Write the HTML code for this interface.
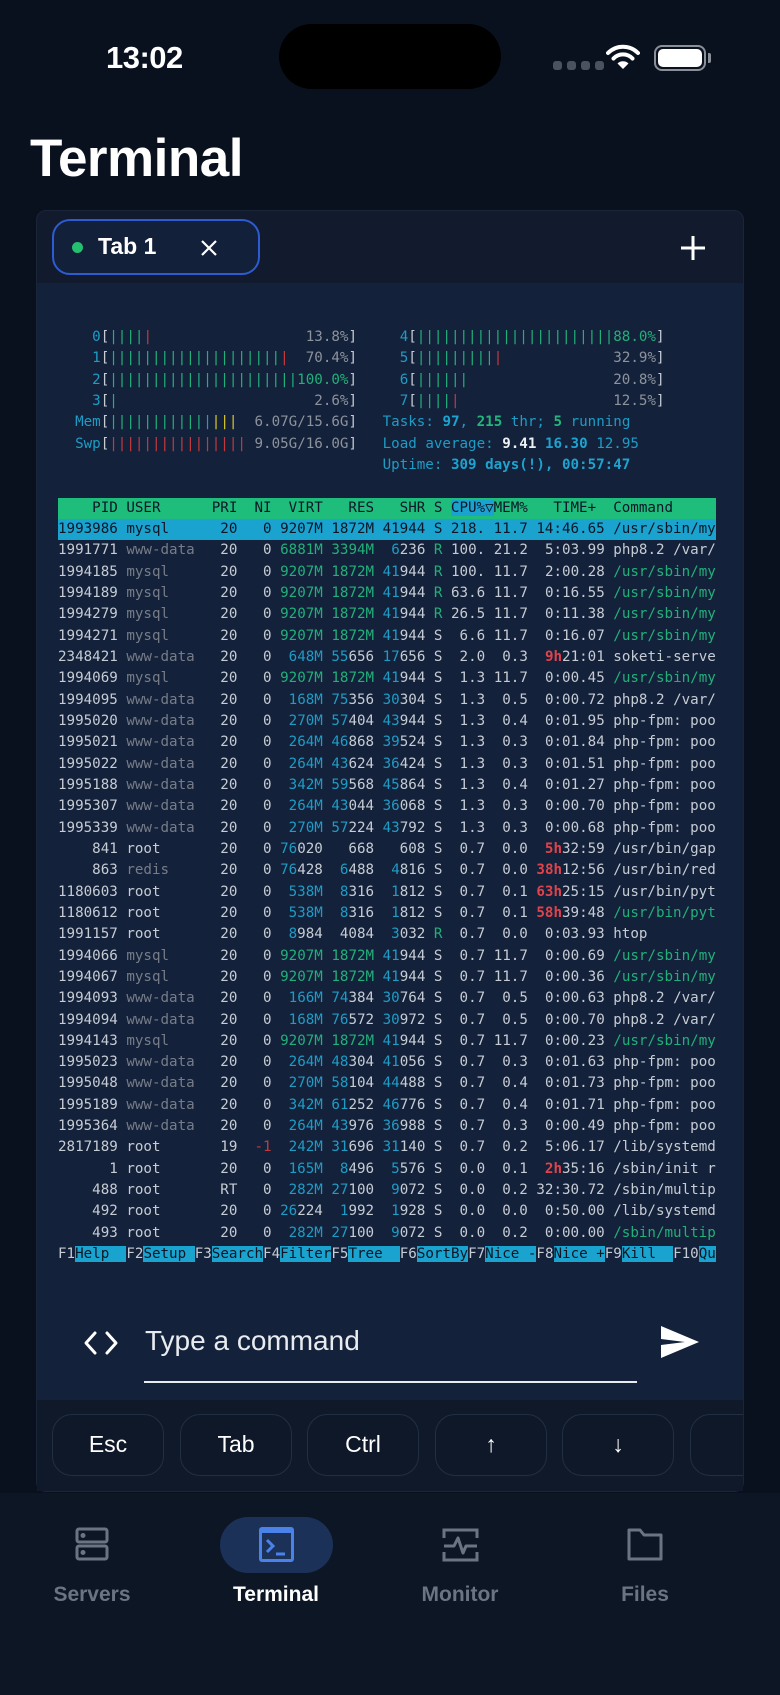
<!DOCTYPE html>
<html><head><meta charset="utf-8"><style>
*{margin:0;padding:0;box-sizing:border-box}
body{width:780px;height:1695px;background:#0a111e;position:relative;overflow:hidden;font-family:"Liberation Sans",sans-serif;color:#fff}
.abs{position:absolute}
.term{position:absolute;left:58px;top:327px;font-family:"DejaVu Sans Mono",monospace;font-size:14.2px;line-height:21.33px;color:#c6ccd4}
.term div{height:21.33px;white-space:pre}
g{color:#22b07a}v{color:#1e9cc6}d{color:#767d88}r{color:#e0434b;font-weight:bold}x{color:#c33a3e}y{color:#d8c72c}o{color:#8c939d}
w{color:#eef1f4;font-weight:bold}bv{color:#1ea3d0;font-weight:bold}bg{color:#22b67c;font-weight:bold}
.hd{background:#1fbd7b;color:#0c1626;width:658px}
.hs{background:#1aa3cf}
.sel{background:#1aa3cf;color:#0c1626;width:658px}
k{background:#1aa3cf;color:#0c1626}
.key{position:absolute;top:1414px;width:112px;height:62px;border:1.5px solid #222f43;border-radius:20px;background:#0e1828;color:#fff;font-size:23px;text-align:center;line-height:59px}
.nl{position:absolute;top:1583px;width:160px;text-align:center;font-size:21px;color:#6b7482;font-weight:bold}
</style></head><body>
<div class="abs" style="left:106px;top:40px;font-size:31px;font-weight:bold;letter-spacing:-0.5px">13:02</div>
<div class="abs" style="left:279px;top:24px;width:222px;height:65px;background:#000;border-radius:33px"></div>
<div class="abs" style="left:553px;top:61px;width:9px;height:9px;border-radius:3px;background:#4a5260"></div>
<div class="abs" style="left:567px;top:61px;width:9px;height:9px;border-radius:3px;background:#4a5260"></div>
<div class="abs" style="left:581px;top:61px;width:9px;height:9px;border-radius:3px;background:#4a5260"></div>
<div class="abs" style="left:595px;top:61px;width:9px;height:9px;border-radius:3px;background:#4a5260"></div>
<svg class="abs" style="left:606px;top:44px" width="34" height="26" viewBox="0 0 34 26"><path d="M2 9 A21 21 0 0 1 32 9" stroke="#fff" stroke-width="4" fill="none" stroke-linecap="round"/><path d="M7.5 14.5 A13 13 0 0 1 26.5 14.5" stroke="#fff" stroke-width="4" fill="none" stroke-linecap="round"/><path d="M17 25 L11.5 19.5 A8 8 0 0 1 22.5 19.5 Z" fill="#fff"/></svg>
<div class="abs" style="left:654px;top:45px;width:52px;height:26px;border:2.5px solid #8a8f98;border-radius:8px"></div>
<div class="abs" style="left:658px;top:49px;width:44px;height:18px;background:#fff;border-radius:5px"></div>
<div class="abs" style="left:708px;top:53px;width:3px;height:10px;background:#8a8f98;border-radius:0 2px 2px 0"></div>
<div class="abs" style="left:30px;top:128px;font-size:53px;font-weight:bold;letter-spacing:-0.5px">Terminal</div>
<div class="abs" style="left:36px;top:210px;width:708px;height:1282px;background:#111b2d;border:1px solid #1a2538;border-radius:10px"></div>
<div class="abs" style="left:37px;top:283px;width:706px;height:1117px;background:#14213a"></div>
<div class="abs" style="left:37px;top:1400px;width:706px;height:91px;background:#0f1929"></div>
<div class="abs" style="left:52px;top:219px;width:208px;height:56px;border:2px solid #2d5bd1;border-radius:18px;background:#132039"></div>
<div class="abs" style="left:72px;top:242px;width:11px;height:11px;border-radius:50%;background:#22c06f"></div>
<div class="abs" style="left:98px;top:233px;font-size:23px;font-weight:bold">Tab 1</div>
<svg class="abs" style="left:200px;top:239px" width="18" height="18" viewBox="0 0 18 18"><path d="M2 2L16 16M16 2L2 16" stroke="#fff" stroke-width="2.2"/></svg>
<svg class="abs" style="left:679px;top:234px" width="28" height="28" viewBox="0 0 28 28"><path d="M14 2V26M2 14H26" stroke="#fff" stroke-width="3"/></svg>
<div class="term">
<div>    <v>0</v>[<g>||||</g><x>|</x>                  <o>13.8%</o>]     <v>4</v>[<g>|||||||||||||||||||||||88.0%</g>]</div>
<div>    <v>1</v>[<g>||||||||||||||||||||</g><x>|</x>  <o>70.4%</o>]     <v>5</v>[<g>|||||||||</g><x>|</x>             <o>32.9%</o>]</div>
<div>    <v>2</v>[<g>||||||||||||||||||||||100.0%</g>]     <v>6</v>[<g>||||||</g>                 <o>20.8%</o>]</div>
<div>    <v>3</v>[<g>|</g>                       <o>2.6%</o>]     <v>7</v>[<g>||||</g><x>|</x>                  <o>12.5%</o>]</div>
<div>  <v>Mem</v>[<g>|||||||||||</g><v>|</v><y>|||</y>  <o>6.07G/15.6G</o>]   <v>Tasks: </v><bv>97</bv><v>, </v><bg>215</bg><v> thr; </v><bg>5</bg><v> running</v></div>
<div>  <v>Swp</v>[<x>||||||||||||||||</x> <o>9.05G/16.0G</o>]   <v>Load average: </v><w>9.41</w> <bv>16.30</bv> <v>12.95</v></div>
<div>                                      <v>Uptime: </v><bv>309 days(!), 00:57:47</bv></div>
<div> </div>
<div class="hd">    PID USER      PRI  NI  VIRT   RES   SHR S <span class="hs">CPU%▽</span>MEM%   TIME+  Command     </div>
<div class="sel">1993986 mysql      20   0 9207M 1872M 41944 S 218. 11.7 14:46.65 /usr/sbin/my</div>
<div>1991771 <d>www-data</d>   20   0 <g>6881M</g> <g>3394M</g>  <v>6</v>236 <g>R</g> 100. 21.2  5:03.99 php8.2 /var/</div>
<div>1994185 <d>mysql</d>      20   0 <g>9207M</g> <g>1872M</g> <v>41</v>944 <g>R</g> 100. 11.7  2:00.28 <g>/usr/sbin/my</g></div>
<div>1994189 <d>mysql</d>      20   0 <g>9207M</g> <g>1872M</g> <v>41</v>944 <g>R</g> 63.6 11.7  0:16.55 <g>/usr/sbin/my</g></div>
<div>1994279 <d>mysql</d>      20   0 <g>9207M</g> <g>1872M</g> <v>41</v>944 <g>R</g> 26.5 11.7  0:11.38 <g>/usr/sbin/my</g></div>
<div>1994271 <d>mysql</d>      20   0 <g>9207M</g> <g>1872M</g> <v>41</v>944 S  6.6 11.7  0:16.07 <g>/usr/sbin/my</g></div>
<div>2348421 <d>www-data</d>   20   0  <v>648M</v> <v>55</v>656 <v>17</v>656 S  2.0  0.3  <r>9h</r>21:01 soketi-serve</div>
<div>1994069 <d>mysql</d>      20   0 <g>9207M</g> <g>1872M</g> <v>41</v>944 S  1.3 11.7  0:00.45 <g>/usr/sbin/my</g></div>
<div>1994095 <d>www-data</d>   20   0  <v>168M</v> <v>75</v>356 <v>30</v>304 S  1.3  0.5  0:00.72 php8.2 /var/</div>
<div>1995020 <d>www-data</d>   20   0  <v>270M</v> <v>57</v>404 <v>43</v>944 S  1.3  0.4  0:01.95 php-fpm: poo</div>
<div>1995021 <d>www-data</d>   20   0  <v>264M</v> <v>46</v>868 <v>39</v>524 S  1.3  0.3  0:01.84 php-fpm: poo</div>
<div>1995022 <d>www-data</d>   20   0  <v>264M</v> <v>43</v>624 <v>36</v>424 S  1.3  0.3  0:01.51 php-fpm: poo</div>
<div>1995188 <d>www-data</d>   20   0  <v>342M</v> <v>59</v>568 <v>45</v>864 S  1.3  0.4  0:01.27 php-fpm: poo</div>
<div>1995307 <d>www-data</d>   20   0  <v>264M</v> <v>43</v>044 <v>36</v>068 S  1.3  0.3  0:00.70 php-fpm: poo</div>
<div>1995339 <d>www-data</d>   20   0  <v>270M</v> <v>57</v>224 <v>43</v>792 S  1.3  0.3  0:00.68 php-fpm: poo</div>
<div>    841 root       20   0 <v>76</v>020   668   608 S  0.7  0.0  <r>5h</r>32:59 /usr/bin/gap</div>
<div>    863 <d>redis</d>      20   0 <v>76</v>428  <v>6</v>488  <v>4</v>816 S  0.7  0.0 <r>38h</r>12:56 /usr/bin/red</div>
<div>1180603 root       20   0  <v>538M</v>  <v>8</v>316  <v>1</v>812 S  0.7  0.1 <r>63h</r>25:15 /usr/bin/pyt</div>
<div>1180612 root       20   0  <v>538M</v>  <v>8</v>316  <v>1</v>812 S  0.7  0.1 <r>58h</r>39:48 <g>/usr/bin/pyt</g></div>
<div>1991157 root       20   0  <v>8</v>984  4084  <v>3</v>032 <g>R</g>  0.7  0.0  0:03.93 htop</div>
<div>1994066 <d>mysql</d>      20   0 <g>9207M</g> <g>1872M</g> <v>41</v>944 S  0.7 11.7  0:00.69 <g>/usr/sbin/my</g></div>
<div>1994067 <d>mysql</d>      20   0 <g>9207M</g> <g>1872M</g> <v>41</v>944 S  0.7 11.7  0:00.36 <g>/usr/sbin/my</g></div>
<div>1994093 <d>www-data</d>   20   0  <v>166M</v> <v>74</v>384 <v>30</v>764 S  0.7  0.5  0:00.63 php8.2 /var/</div>
<div>1994094 <d>www-data</d>   20   0  <v>168M</v> <v>76</v>572 <v>30</v>972 S  0.7  0.5  0:00.70 php8.2 /var/</div>
<div>1994143 <d>mysql</d>      20   0 <g>9207M</g> <g>1872M</g> <v>41</v>944 S  0.7 11.7  0:00.23 <g>/usr/sbin/my</g></div>
<div>1995023 <d>www-data</d>   20   0  <v>264M</v> <v>48</v>304 <v>41</v>056 S  0.7  0.3  0:01.63 php-fpm: poo</div>
<div>1995048 <d>www-data</d>   20   0  <v>270M</v> <v>58</v>104 <v>44</v>488 S  0.7  0.4  0:01.73 php-fpm: poo</div>
<div>1995189 <d>www-data</d>   20   0  <v>342M</v> <v>61</v>252 <v>46</v>776 S  0.7  0.4  0:01.71 php-fpm: poo</div>
<div>1995364 <d>www-data</d>   20   0  <v>264M</v> <v>43</v>976 <v>36</v>988 S  0.7  0.3  0:00.49 php-fpm: poo</div>
<div>2817189 root       19  <x>-1</x>  <v>242M</v> <v>31</v>696 <v>31</v>140 S  0.7  0.2  5:06.17 /lib/systemd</div>
<div>      1 root       20   0  <v>165M</v>  <v>8</v>496  <v>5</v>576 S  0.0  0.1  <r>2h</r>35:16 /sbin/init r</div>
<div>    488 root       RT   0  <v>282M</v> <v>27</v>100  <v>9</v>072 S  0.0  0.2 32:30.72 /sbin/multip</div>
<div>    492 root       20   0 <v>26</v>224  <v>1</v>992  <v>1</v>928 S  0.0  0.0  0:50.00 /lib/systemd</div>
<div>    493 root       20   0  <v>282M</v> <v>27</v>100  <v>9</v>072 S  0.0  0.2  0:00.00 <g>/sbin/multip</g></div>
<div>F1<k>Help  </k>F2<k>Setup </k>F3<k>Search</k>F4<k>Filter</k>F5<k>Tree  </k>F6<k>SortBy</k>F7<k>Nice -</k>F8<k>Nice +</k>F9<k>Kill  </k>F10<k>Qu</k></div>
</div>
<svg class="abs" style="left:83px;top:1330px" width="36" height="26" viewBox="0 0 36 26"><path d="M12 3L3 13L12 23M24 3L33 13L24 23" stroke="#fff" stroke-width="3" fill="none" stroke-linecap="round" stroke-linejoin="round"/></svg>
<div class="abs" style="left:145px;top:1325px;font-size:28px;color:#e8ecf0">Type a command</div>
<div class="abs" style="left:144px;top:1381px;width:493px;height:2px;background:#e8ecf0"></div>
<svg class="abs" style="left:660px;top:1325px" width="40" height="34" viewBox="0 0 40 34"><path d="M1 1L39 17L1 33L1 20L25 17L1 14Z" fill="#fff"/></svg>
<div class="key" style="left:52px">Esc</div>
<div class="key" style="left:180px">Tab</div>
<div class="key" style="left:307px">Ctrl</div>
<div class="key" style="left:435px">↑</div>
<div class="key" style="left:562px">↓</div>
<div class="abs" style="left:690px;top:1400px;width:53px;height:91px;overflow:hidden"><div class="key" style="left:0;top:14px"></div></div>
<div class="abs" style="left:0;top:1493px;width:780px;height:202px;background:#0d1625"></div>
<svg class="abs" style="left:74px;top:1526px" width="36" height="36" viewBox="0 0 36 36" fill="none" stroke="#6b7482" stroke-width="3"><rect x="3" y="3" width="30" height="13" rx="2"/><rect x="3" y="20" width="30" height="13" rx="2"/><circle cx="9" cy="9.5" r="1" fill="#6b7482"/><circle cx="9" cy="26.5" r="1" fill="#6b7482"/></svg>
<div class="nl" style="left:12px">Servers</div>
<div class="abs" style="left:220px;top:1517px;width:113px;height:56px;background:#1b3158;border-radius:28px"></div>
<svg class="abs" style="left:258px;top:1526px" width="37" height="37" viewBox="0 0 37 37"><rect x="1" y="1" width="35" height="35" rx="3" fill="#4b82ea"/><rect x="4" y="7" width="29" height="26" fill="#1b3158"/><path d="M9 14L15 20L9 26" stroke="#4b82ea" stroke-width="3" fill="none"/><path d="M18 28H27" stroke="#4b82ea" stroke-width="3"/></svg>
<div class="nl" style="left:196px;color:#fff">Terminal</div>
<svg class="abs" style="left:442px;top:1527px" width="37" height="36" viewBox="0 0 37 36" fill="none" stroke="#6b7482" stroke-width="3"><path d="M2 11V3H35V11M2 25V33H35V25"/><path d="M2 19H12L16 11L21 26L24 19H35" stroke-linejoin="round"/></svg>
<div class="nl" style="left:380px">Monitor</div>
<svg class="abs" style="left:627px;top:1527px" width="36" height="34" viewBox="0 0 36 34" fill="none" stroke="#6b7482" stroke-width="3"><path d="M2 3H13L17 8H34V32H2Z" stroke-linejoin="round"/></svg>
<div class="nl" style="left:565px">Files</div>
</body></html>
